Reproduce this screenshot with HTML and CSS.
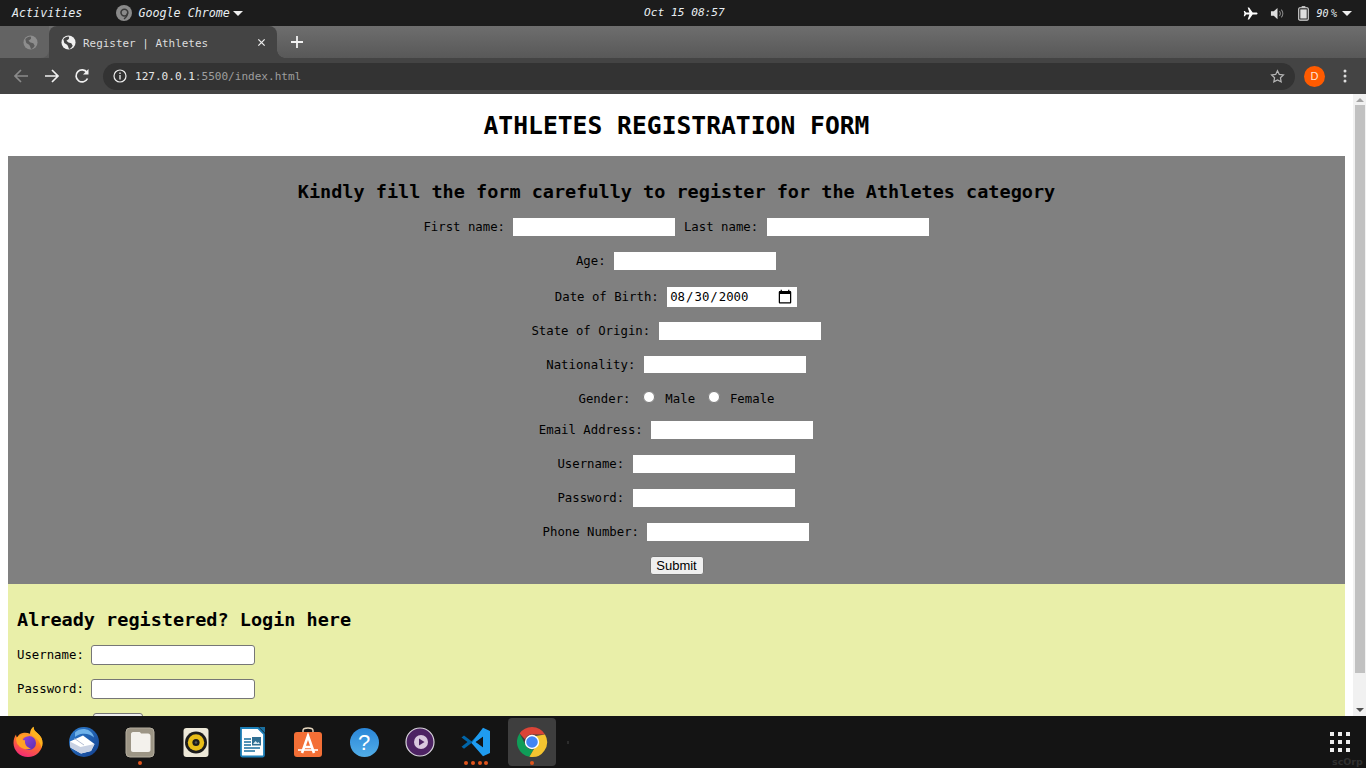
FILE: index.html
```html
<!DOCTYPE html>
<html lang="en">
<head>
<meta charset="utf-8">
<title>Register | Athletes</title>
<link rel="stylesheet" href="styles.css">
</head>
<body>
<div class="screen">
  <header class="topbar">
    <span class="activities">Activities</span>
    <span class="appmenu">
      <svg class="appicon" viewBox="0 0 16 16"><circle cx="8" cy="8" r="8" fill="#8a8a8a"/><circle cx="8.400" cy="7.600" r="3.400" fill="none" stroke="#3a3a3a" stroke-width="1.600"/><path d="M11.500 8c0 3-1.500 4.500-3.500 6" fill="none" stroke="#3a3a3a" stroke-width="1.400"/></svg>
      <span>Google Chrome</span>
      <i class="caret"></i>
    </span>
    <span class="clock">Oct 15 08:57</span>
    <span class="status">
      <svg class="st-plane" viewBox="0 0 16 16"><path fill="#fff" d="M15.500 8c0-.7-.8-1.100-1.500-1.100H10.300L6.500 1.500H5l1.800 5.400H3.300L2 5.200H.8L1.500 8 .8 10.800H2l1.300-1.700h3.500L5 14.500h1.500l3.800-5.400H14c.7 0 1.500-.4 1.500-1.100z"/></svg>
      <svg class="st-vol" viewBox="0 0 16 16"><path fill="#ddd" d="M1 5.500h3L8 2v12L4 10.500H1z"/><path d="M10 5.500a3.500 3.500 0 0 1 0 5M12 3.800a6 6 0 0 1 0 8.400" fill="none" stroke="#888" stroke-width="1.100"/></svg>
      <svg class="st-bat" viewBox="0 0 12 16"><path fill="#ddd" d="M4 0h4v1.500H4z"/><rect x=".8" y="1.800" width="10.400" height="13.400" rx="1.200" fill="none" stroke="#ddd" stroke-width="1.200"/><rect x="2.500" y="3.500" width="7" height="10" fill="#ddd"/></svg>
      <span class="st-pct">90 %</span>
      <i class="caret"></i>
    </span>
  </header>

  <div class="tabstrip">
    <div class="tab-idle">
      <svg class="globe" viewBox="0 0 16 16"><circle cx="8" cy="8" r="7.500" fill="#8d8d8d"/><path fill="#5c5c5c" d="M2.500 4.500C4 2.500 6 1.500 8 1.500c.8 1.200.8 2.300 0 3L5.800 6.200 8 8l3 .8 1.500 2.700c-1 2-2.500 3.200-4 3.500C8 13 7.300 11.500 6.500 10.500L3.500 8.500z"/></svg>
    </div>
    <div class="tab-active">
      <svg class="globe" viewBox="0 0 16 16"><circle cx="8" cy="8" r="7.500" fill="#f0f0f0"/><path fill="#444" d="M2.500 4.500C4 2.500 6 1.500 8 1.500c.8 1.200.8 2.300 0 3L5.800 6.200 8 8l3 .8 1.500 2.700c-1 2-2.500 3.200-4 3.500C8 13 7.300 11.500 6.500 10.500L3.500 8.500z"/></svg>
      <span class="tab-title">Register | Athletes</span>
      <svg class="tab-x" viewBox="0 0 10 10"><path d="M1.500 1.500l7 7M8.500 1.500l-7 7" stroke="#eee" stroke-width="1.400"/></svg>
    </div>
    <svg class="tab-new" viewBox="0 0 12 12"><path d="M6 0v12M0 6h12" stroke="#f2f2f2" stroke-width="1.800"/></svg>
  </div>

  <div class="toolbar">
    <svg class="nav nav-back" viewBox="0 0 16 16"><path d="M15 8H2M8 2L2 8l6 6" fill="none" stroke="#8a8a8a" stroke-width="1.700"/></svg>
    <svg class="nav" viewBox="0 0 16 16"><path d="M1 8h13M8 2l6 6-6 6" fill="none" stroke="#f0f0f0" stroke-width="1.700"/></svg>
    <svg class="nav nav-reload" viewBox="0 0 16 16"><path d="M13.500 10.500A6 6 0 1 1 13 4.500" fill="none" stroke="#f0f0f0" stroke-width="1.700"/><path d="M14.500 1v5.500H9z" fill="#f0f0f0"/></svg>
    <div class="urlbar">
      <svg class="info" viewBox="0 0 14 14"><circle cx="7" cy="7" r="6" fill="none" stroke="#eee" stroke-width="1.200"/><path d="M7 6v4.500M7 3.500v1.400" stroke="#eee" stroke-width="1.300"/></svg>
      <span class="url"><b>127.0.0.1</b>:5500/index.html</span>
      <svg class="star" viewBox="0 0 16 16"><path d="M8 1.800l1.900 4 4.400.5-3.200 3 .8 4.400L8 11.600l-3.900 2.100.8-4.400-3.200-3 4.400-.5z" fill="none" stroke="#b5b5b5" stroke-width="1.300"/></svg>
    </div>
    <span class="avatar">D</span>
    <svg class="kebab" viewBox="0 0 4 14"><circle cx="2" cy="2" r="1.500" fill="#ddd"/><circle cx="2" cy="7" r="1.500" fill="#ddd"/><circle cx="2" cy="12" r="1.500" fill="#ddd"/></svg>
  </div>

  <div class="viewport">
    <main class="page">
      <h1>ATHLETES REGISTRATION FORM</h1>
      <form class="register">
        <h2>Kindly fill the form carefully to register for the Athletes category</h2>
        <label>First name:</label> <input type="text"> <label>Last name:</label> <input type="text"><br><br>
        <label>Age:</label> <input type="text"><br><br>
        <label>Date of Birth:</label> <input class="date" type="date" value="2000-08-30"><br><br>
        <label>State of Origin:</label> <input type="text"><br><br>
        <label>Nationality:</label> <input type="text"><br><br>
        <label>Gender:</label> <input class="radio" type="radio" name="g"> <label>Male</label> <input class="radio" type="radio" name="g"> <label>Female</label><br><br>
        <label>Email Address:</label> <input type="text"><br><br>
        <label>Username:</label> <input type="text"><br><br>
        <label>Password:</label> <input type="password"><br><br>
        <label>Phone Number:</label> <input type="text"><br><br>
        <button type="button" class="btn">Submit</button>
      </form>
      <form class="login">
        <h2>Already registered? Login here</h2>
        <label>Username:</label> <input type="text"><br><br>
        <label>Password:</label> <input type="password"><br><br>
        <button type="button" class="btn btn-login" aria-label="Login"></button>
      </form>
    </main>
    <div class="scrollbar">
      <i class="arrow-up"></i>
      <div class="thumb"></div>
      <i class="arrow-down"></i>
    </div>
  </div>

  <footer class="dock">
    <div class="dock-item">
      <svg viewBox="0 0 32 32"><defs><linearGradient id="ff" x1=".7" y1="0" x2=".3" y2="1"><stop offset="0" stop-color="#ffc93a"/><stop offset=".45" stop-color="#ff7a1f"/><stop offset="1" stop-color="#f2267a"/></linearGradient><linearGradient id="ffp" x1="0" y1="0" x2="1" y2="1"><stop offset="0" stop-color="#8f47e0"/><stop offset="1" stop-color="#5b2bb0"/></linearGradient></defs><path fill="url(#ff)" d="M16 31C8 31 1.500 24.800 1.500 17c0-3.500 1-6.500 2.500-8.500.2 1.500.6 2.500 1.200 3C6.500 8.500 9 7 12 6.800c2-.2 4 .1 6 1 0-2.500 1-5 3.500-7 0 3 1.500 4.500 4 6.500 3.500 2.800 5 6 5 9.700C30.500 24.800 24 31 16 31z"/><path fill="#ffb21e" d="M21.500 .8c0 3 1.500 4.500 4 6.500 3.500 2.800 5 6 5 9.700 0 1.800-.3 3.500-1 5-1-5.500-4-9.500-9-12.500C18.500 6 19.500 3 21.500 .8z"/><circle cx="17" cy="17" r="7" fill="url(#ffp)"/><path fill="#ffa126" d="M4 12.500c2-2.800 5-4 8.500-4 1.800 0 3.500.6 4.500 1.700-3-.2-6.500 1-6.500 2.800 0 .8.800 1.300 2.500 1.300-.5 3.500 1.500 7.500 6 8.200-5 1.800-10.500 0-12.800-3.500C5 18.500 4.300 15.500 4 12.500z"/></svg>
    </div>
    <div class="dock-item">
      <svg viewBox="0 0 32 32"><defs><linearGradient id="tb" x1="0" y1="0" x2="1" y2="1"><stop offset="0" stop-color="#2f7fd0"/><stop offset="1" stop-color="#123f8e"/></linearGradient></defs><circle cx="16" cy="16" r="15" fill="url(#tb)"/><path fill="#6fb2ea" d="M7 6.500C11 2.500 17 2 21 4.500c3 1.800 4.500 4.500 5 7-3-3-8-4.500-13-3.500-2.500.5-4.500 1.500-6 3z"/><path fill="#fff" d="M2 15.500L15 9.500l11.500 8.500-3.500 7-10 2.500-10.500-6z"/><path fill="#c8d1e3" d="M2.500 21.500L2 15.500l10.500 5.500 14-3-3.500 7-10 2.500z"/><path d="M6.500 12.500l9.500 6.500" stroke="#aab6cd" stroke-width=".9"/></svg>
    </div>
    <div class="dock-item">
      <svg viewBox="0 0 32 32"><rect x="2" y="2" width="28" height="29" rx="4" fill="#9c9585"/><rect x="2" y="2" width="28" height="29" rx="4" fill="none" stroke="#b5ae9f"/><path fill="#f3f1ec" d="M7 8c0-1 .8-2 2-2h6c1 0 1.500.5 2 1.500h7c1.500 0 2.500 1 2.500 2.500v14c0 1.200-1 2-2.200 2H9c-1.200 0-2-.8-2-2z"/></svg>
    </div>
    <div class="dock-item">
      <svg viewBox="0 0 32 32"><rect x="3.500" y="2" width="25" height="29" rx="3" fill="#ede8d8"/><circle cx="16" cy="16.500" r="11" fill="#1c1c1c"/><circle cx="16" cy="16.500" r="8.200" fill="#e8bd17"/><circle cx="16" cy="16.500" r="3.600" fill="#1c1c1c"/><circle cx="16" cy="16.500" r="1.300" fill="#555"/></svg>
    </div>
    <div class="dock-item">
      <svg viewBox="0 0 32 32"><path fill="#fff" stroke="#1c7fb8" stroke-width="1.800" d="M5 2h17l6 6v21a1.500 1.500 0 0 1-1.500 1.500h-20A1.500 1.500 0 0 1 5 29z"/><path fill="#1a6f9f" d="M23 1l6 6V1z"/><path stroke="#1a6f9f" stroke-width="1.300" d="M8 13h7M8 16h7M8 19h7M8 22h16M8 25h11"/><rect x="16" y="11" width="9" height="8.500" fill="#2f6e92"/><path fill="#d8e8f0" d="M17 18l2.500-3 2 2 1-1 1.500 2z"/></svg>
    </div>
    <div class="dock-item">
      <svg viewBox="0 0 32 32"><path d="M11 7V4.500C11 2.800 13 2 16 2s5 .8 5 2.500V7" fill="none" stroke="#e8d8c0" stroke-width="1.400"/><rect x="2" y="6" width="28" height="25" rx="3" fill="#f36f36"/><path d="M10 27l6-17 6 17M12 21h8" fill="none" stroke="#fff" stroke-width="2.600"/><path d="M6 24h20" stroke="#fff" stroke-width="1.600"/></svg>
    </div>
    <div class="dock-item help">
      <span class="help-mark">?</span>
    </div>
    <div class="dock-item">
      <svg viewBox="0 0 32 32"><circle cx="16" cy="16" r="14" fill="#4d2363" stroke="#d8d4dc" stroke-width="1.200"/><circle cx="17" cy="16" r="7" fill="#d9c8de"/><path fill="#4d2363" d="M15 12.500l5.500 3.500-5.500 3.500z"/></svg>
    </div>
    <div class="dock-item">
      <svg viewBox="0 0 32 32"><path fill="#0065a9" d="M1.500 11.500l2.500-2 7.500 5.800L23 3.500v7l-8 5.500 8 5.500v7L11.500 17l-7.500 5.800-2.500-2 6-4.800z"/><path fill="#1f9cf0" d="M23 1.800l7 3.200v22l-7 3.200L11.500 17zM23 10.500L15.500 16l7.500 5.500z"/></svg>
    </div>
    <div class="dock-item dock-active">
      <svg viewBox="0 0 32 32"><path fill="#db4437" d="M16 1a15 15 0 0 1 13 7.500H16a7.500 7.500 0 0 0-7 4.800L3.600 7.500A15 15 0 0 1 16 1z"/><path fill="#0f9d58" d="M3.600 7.500L9.800 19.500a7.500 7.500 0 0 0 7.900 3.900l-4.300 7.400A15 15 0 0 1 3.600 7.500z"/><path fill="#f4c430" d="M29 8.500A15 15 0 0 1 13.400 30.800l6.600-11.300a7.500 7.500 0 0 0-.5-9.500z"/><circle cx="16" cy="16" r="7.200" fill="#fff"/><circle cx="16" cy="16" r="5.800" fill="#4285f4"/></svg>
    </div>
    <i class="dock-sep"></i>
    <div class="appgrid">
      <i></i><i></i><i></i><i></i><i></i><i></i><i></i><i></i><i></i>
    </div>
    <i class="run run-files"></i>
    <i class="run run-code1"></i><i class="run run-code2"></i><i class="run run-code3"></i><i class="run run-code4"></i>
    <i class="run run-chrome"></i>
    <span class="mark">scOrp</span>
  </footer>
</div>
</body>
</html>
```

FILE: styles.css
```css
* { box-sizing: border-box; }
html, body { margin: 0; height: 100%; overflow: hidden; }
body { font-family: "DejaVu Sans Mono", monospace; }

.screen { width: 1366px; height: 768px; display: flex; flex-direction: column; overflow: hidden; }

/* GNOME top bar */
.topbar { height: 26px; flex: none; background: #1c1c1c; color: #e8eef2; display: flex; align-items: center; font-style: italic; font-size: 11.700px; position: relative; }
.activities { margin-left: 12px; }
.appmenu { margin-left: 33px; display: flex; align-items: center; gap: 6px; }
.appicon { width: 16px; height: 16px; margin-left: 1px; }
.appmenu .caret { margin-left: -3px; }
.caret { width: 0; height: 0; border-left: 5px solid transparent; border-right: 5px solid transparent; border-top: 5px solid #eee; }
.clock { position: absolute; left: 644px; top: 6px; font-size: 11.200px; }
.status { margin-left: auto; margin-right: 14px; display: flex; align-items: center; }
.st-plane { width: 15px; height: 15px; margin-right: 12px; }
.st-vol { width: 15px; height: 15px; margin-right: 13px; }
.st-bat { width: 11px; height: 15px; margin-right: 7px; }
.st-pct { font-size: 10px; word-spacing: -3.500px; margin-right: 5px; }

/* Tabs */
.tabstrip { height: 32px; flex: none; background: linear-gradient(#6e6e6e, #585858); display: flex; align-items: center; }
.tab-idle { width: 49px; height: 32px; background: #636363; border-radius: 0 0 8px 0; display: flex; align-items: center; justify-content: center; padding-left: 12px; }
.tab-active { width: 228px; height: 32px; background: #444; border-radius: 8px 8px 0 0; display: flex; align-items: center; padding-left: 12px; position: relative; }
.tab-active::after { content: ""; position: absolute; left: 100%; bottom: 0; width: 8px; height: 8px; background: radial-gradient(circle at 100% 0, transparent 7.500px, #444 8px); }
.globe { width: 15px; height: 15px; flex: none; }
.tab-title { margin-left: 7px; margin-top: 2px; font-size: 10.950px; color: #ddd; flex: 1; }
.tab-x { width: 9px; height: 9px; margin-right: 11px; }
.tab-new { width: 12px; height: 12px; margin-left: 14px; }

/* Toolbar */
.toolbar { height: 36px; flex: none; background: #444; display: flex; align-items: center; }
.nav { width: 16px; height: 16px; margin-left: 15px; }
.nav-back { margin-left: 13px; }
.nav-reload { margin-left: 14px; }
.urlbar { margin-left: 13px; width: 1192px; height: 27px; background: #333; border-radius: 14px; display: flex; align-items: center; padding: 0 10px 0 10px; }
.info { width: 14px; height: 14px; }
.url { margin-left: 8px; font-size: 11.060px; color: #9e9e9e; flex: 1; }
.url b { color: #e6e6e6; font-weight: normal; }
.star { width: 15px; height: 15px; }
.avatar { width: 21px; height: 21px; margin-left: 9px; border-radius: 50%; background: #ff5b00; color: #ffe6d6; font: 11px/21px "Liberation Sans", sans-serif; text-align: center; }
.kebab { width: 4px; height: 14px; margin-left: 18px; }

/* Viewport */
.viewport { flex: 1; min-height: 0; display: flex; background: #fff; }
.page { width: 1353px; overflow: hidden; font-size: 12.330px; color: #000; }
.page h1 { margin: 16.500px 8px; font-size: 24.660px; text-align: center; }
.page h2 { margin: 15.300px 0 15.350px; font-size: 18.500px; }
.register, .login { margin: 0 8px; padding: 9.600px 9px; }
.register { background: #808080; text-align: center; height: 428px; }
.login { background: #e9efa9; }
input[type="text"], input[type="password"] { width: 164px; height: 19.800px; padding: 1px 2px; border: 1px solid #767676; border-radius: 3px; background: #fff; margin: 0; }
.register input[type="text"], .register input[type="password"] { border-color: #808080; border-radius: 0; }
.date { width: 132px; height: 22px; padding: 1px 2px; border: 1px solid #808080; background: #fff; margin: 1px 0 -1px; font: 12.330px "DejaVu Sans Mono", monospace; }
.date::-webkit-calendar-picker-indicator { width: 16px; height: 16px; padding: 0; margin: 0 2px 0 0; }
.radio { width: 12px; height: 12px; margin: 3px 3px 0 5px; }
.btn { width: 54px; height: 19px; padding: 0; border: 1px solid #767676; border-radius: 3px; background: #efefef; font: 13px "Liberation Sans", sans-serif; color: #000; }
.btn-login { margin-left: 76px; width: 50px; }

/* Scrollbar */
.scrollbar { flex: 1; background: #f1f1f1; position: relative; display: flex; flex-direction: column; align-items: center; }
.thumb { position: absolute; top: 11px; left: 2px; right: 1px; height: 568px; background: #c1c1c1; }
.arrow-up, .arrow-down { position: absolute; width: 0; height: 0; border-left: 4px solid transparent; border-right: 4px solid transparent; }
.arrow-up { top: 4px; border-bottom: 4px solid #a3a3a3; }
.arrow-down { bottom: 4px; border-top: 4px solid #505050; }

/* Dock */
.dock { height: 52px; flex: none; background: #141414; display: flex; align-items: center; position: relative; }
.dock-item { width: 56px; height: 48px; flex: none; display: flex; align-items: center; justify-content: center; }
.dock-item svg { width: 32px; height: 32px; }
.dock-active { width: 48px; margin-left: 4px; margin-right: 4px; background: #3e3e3e; border-radius: 4px; }
.help-mark { width: 29px; height: 29px; border-radius: 50%; background: linear-gradient(#2a86d8, #52aee8); color: #fff; font: 22px/29px "Liberation Sans", sans-serif; text-align: center; }
.dock-sep { width: 2px; height: 3px; background: #2c2c2c; margin-left: 7px; }
.appgrid { margin-left: auto; margin-right: 16px; display: grid; grid-template-columns: repeat(3, 4px); gap: 4px; }
.appgrid i { width: 4px; height: 4px; background: #eee; }
.run { position: absolute; top: 45px; width: 4px; height: 4px; border-radius: 50%; background: #e0541c; }
.run-files { left: 138px; }
.run-code1 { left: 464px; }
.run-code2 { left: 471px; }
.run-code3 { left: 478px; }
.run-code4 { left: 484px; }
.run-chrome { left: 530px; }
.mark { position: absolute; left: 1332px; top: 40px; font: bold 9.500px "DejaVu Sans", sans-serif; color: #303030; }
```
